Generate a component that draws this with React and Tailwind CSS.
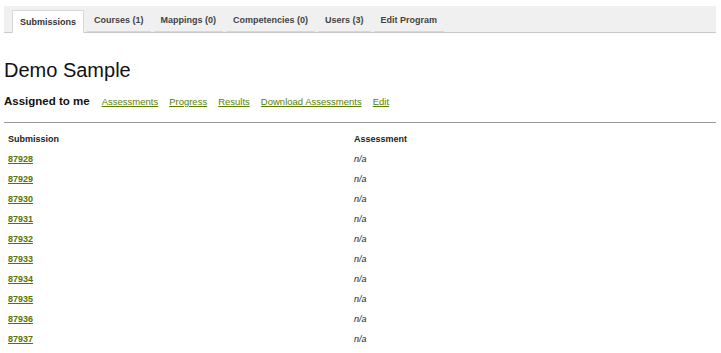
import React from 'react';

const tabs = ['Submissions', 'Courses (1)', 'Mappings (0)', 'Competencies (0)', 'Users (3)', 'Edit Program'];
const links = ['Assessments', 'Progress', 'Results', 'Download Assessments', 'Edit'];
const submissions = ['87928', '87929', '87930', '87931', '87932', '87933', '87934', '87935', '87936', '87937'];

const App = () => {
  return (
    <div className="min-h-[353px] bg-white pl-[4px] pr-[5px] text-[#222]" style={{ fontFamily: '"Liberation Sans", Arial, sans-serif' }}>
      <div className="mt-[6px] flex h-[27px] items-end gap-[3px] border-b border-[#c8c8c8] bg-[#f0f0f0] pl-[8px]">
        {tabs.map((tab, i) =>
          i === 0 ? (
            <div
              key={tab}
              className="-mb-px flex h-[23px] items-center border border-b-0 border-[#d8d8d8] bg-white px-[7px] pt-px text-[9px] font-bold text-[#333]"
            >
              {tab}
            </div>
          ) : (
            <div
              key={tab}
              className="flex h-[22px] items-center border-b border-[#d8d8d8] px-[7px] pt-px text-[9px] font-bold text-[#444]"
            >
              {tab}
            </div>
          )
        )}
      </div>

      <h1 className="mt-[25px] text-[20px] leading-[24px] text-[#111]">Demo Sample</h1>

      <div className="mt-[11px] flex items-baseline">
        <span className="text-[11.5px] font-bold text-[#111]">Assigned to me</span>
        <div className="ml-[12px] flex gap-[11px]">
          {links.map((l) => (
            <a key={l} href="#" className="text-[9.5px] text-[#5b7d00] underline">
              {l}
            </a>
          ))}
        </div>
      </div>

      <hr className="mt-[12px] border-t border-[#999]" />

      <table className="mt-[7px] w-[712px] border-collapse text-[9px]">
        <thead>
          <tr>
            <th className="h-[19px] w-[346px] px-[4px] text-left font-bold text-[#222]">Submission</th>
            <th className="h-[19px] px-[4px] text-left font-bold text-[#222]">Assessment</th>
          </tr>
        </thead>
        <tbody>
          {submissions.map((s) => (
            <tr key={s}>
              <td className="h-[20px] px-[4px]">
                <a href="#" className="font-bold text-[#5b7300] underline">
                  {s}
                </a>
              </td>
              <td className="h-[20px] px-[4px] italic text-[#222]">n/a</td>
            </tr>
          ))}
        </tbody>
      </table>
    </div>
  );
};

export default App;
